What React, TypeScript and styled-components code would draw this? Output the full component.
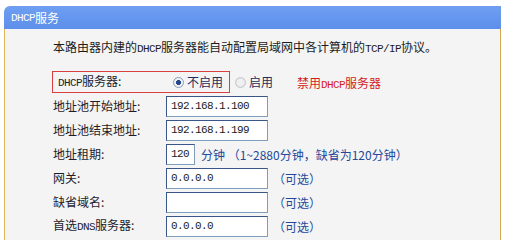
import styled, { createGlobalStyle } from "styled-components";

const GlobalStyle = createGlobalStyle`
  body {
    margin: 0;
    background: #ffffff;
    font-family: "Noto Sans CJK SC", "Noto Sans", sans-serif;
    font-size: 12px;
    overflow: hidden;
  }
`;

const Page = styled.div`
  padding: 6px 0 0 4px;
  width: 501px;
  height: 240px;
  box-sizing: border-box;
  display: flex;
  flex-direction: column;
  overflow: hidden;
`;

const TitleBar = styled.div`
  height: 23px;
  flex: none;
  display: flex;
  align-items: center;
  padding-left: 7px;
  background: linear-gradient(#6e9ff2, #5d8fea);
  border-top-left-radius: 6px;
  color: #ffffff;
  font-size: 12px;
`;

const Panel = styled.div`
  flex: 1;
  border-left: 1px solid #e4b65a;
  border-right: 1px solid #d4a852;
  background: #f4f4f4;
  padding: 10px 0 0 48px;
  overflow: hidden;
`;

const Latin = styled.span`
  font-family: "Liberation Mono", monospace;
  font-size: 11px;
  letter-spacing: -0.6px;
`;

const Intro = styled.p`
  margin: 0 0 13px;
  line-height: 16px;
  color: #1c1c1c;
`;

const Row = styled.div`
  display: flex;
  align-items: center;
  height: 24px;
`;

const Label = styled.span<{ $w?: number }>`
  width: ${(p) => p.$w ?? 113}px;
  flex: none;
  color: #1c1c2c;
  line-height: 16px;
`;

const Highlight = styled.div`
  display: flex;
  align-items: center;
  height: 22px;
  margin-left: -1px;
  padding: 0 5px;
  border: 1px solid #d8413f;
  box-sizing: border-box;
  width: 178px;
`;

const Radio = styled.span<{ $checked?: boolean }>`
  width: 11px;
  height: 11px;
  flex: none;
  box-sizing: border-box;
  border-radius: 50%;
  margin: 0 3px 0 ${(p) => (p.$checked ? 5 : 5)}px;
  border: 1px solid ${(p) => (p.$checked ? "#8a9cb8" : "#c4c8cc")};
  background: ${(p) =>
    p.$checked
      ? "radial-gradient(circle, #24468a 0 2.2px, #eef2f8 2.8px)"
      : "radial-gradient(circle, #eef0f2 0 3px, #dcdfe2 5px)"};
`;

const RadioText = styled.span`
  color: #1c2c5c;
  line-height: 16px;
`;

const Warn = styled.span`
  margin-left: 24px;
  color: #d41c1c;
`;

const Input = styled.div<{ $w?: number }>`
  width: ${(p) => p.$w ?? 102}px;
  height: 21px;
  flex: none;
  box-sizing: border-box;
  display: flex;
  align-items: center;
  padding-left: 4px;
  background: #ffffff;
  border: 1px solid #7f9db9;
  border-left-color: #3a5588;
  border-top-color: #3a5588;
  font-family: "Liberation Mono", monospace;
  font-size: 11px;
  letter-spacing: -0.6px;
  color: #1a1a1a;
`;

const Hint = styled.span<{ $gap?: number }>`
  margin-left: ${(p) => p.$gap ?? 5}px;
  color: #24489a;
  white-space: nowrap;
`;

const rows = [
  { label: "地址池开始地址:", value: "192.168.1.100" },
  { label: "地址池结束地址:", value: "192.168.1.199" },
];

const optional = [
  { label: "网关:", value: "0.0.0.0" },
  { label: "缺省域名:", value: "" },
  { label: <>首选<Latin>DNS</Latin>服务器:</>, value: "0.0.0.0" },
];

export default function App() {
  return (
    <>
      <GlobalStyle />
      <Page>
        <TitleBar>
          <Latin>DHCP</Latin>服务
        </TitleBar>
        <Panel>
          <Intro>
            本路由器内建的<Latin>DHCP</Latin>服务器能自动配置局域网中各计算机的<Latin>TCP/IP</Latin>协议。
          </Intro>
          <Row>
            <Highlight>
              <Label $w={110}>
                <Latin>DHCP</Latin>服务器:
              </Label>
              <Radio $checked />
              <RadioText>不启用</RadioText>
            </Highlight>
            <Radio />
            <RadioText>启用</RadioText>
            <Warn>
              禁用<Latin>DHCP</Latin>服务器
            </Warn>
          </Row>
          {rows.map((r) => (
            <Row key={r.label}>
              <Label>{r.label}</Label>
              <Input>{r.value}</Input>
            </Row>
          ))}
          <Row>
            <Label>地址租期:</Label>
            <Input $w={29}>120</Input>
            <Hint $gap={6}>分钟 （1~2880分钟，缺省为120分钟）</Hint>
          </Row>
          {optional.map((r, i) => (
            <Row key={i}>
              <Label>{r.label}</Label>
              <Input>{r.value}</Input>
              <Hint>（可选）</Hint>
            </Row>
          ))}
          <Row>
            <Label />
            <Input />
          </Row>
        </Panel>
      </Page>
    </>
  );
}
